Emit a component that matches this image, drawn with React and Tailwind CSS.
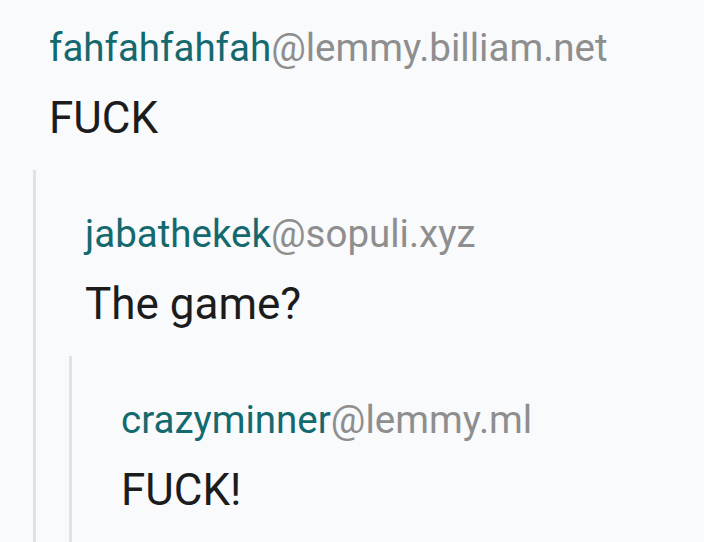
const thread = {
  user: 'fahfahfahfah',
  host: '@lemmy.billiam.net',
  body: 'FUCK',
  reply: {
    user: 'jabathekek',
    host: '@sopuli.xyz',
    body: 'The game?',
    reply: {
      user: 'crazyminner',
      host: '@lemmy.ml',
      body: 'FUCK!',
    },
  },
};

const CommentText = ({ comment }) => (
  <div>
    <div className="text-[38.5px] leading-[48px] whitespace-nowrap">
      <span className="text-[#14696e]">{comment.user}</span>
      <span className="text-[#8e8e8e]">{comment.host}</span>
    </div>
    <div className="mt-[18px] text-[44px] leading-[56px] text-[#1c1c1c]">{comment.body}</div>
  </div>
);

const Reply = ({ comment }) => (
  <div className="mt-6 border-l-[3px] border-[#dde4e8] pt-10 pb-24 pl-[49px]">
    <CommentText comment={comment} />
    {comment.reply && (
      <div className="-ml-[16px]">
        <Reply comment={comment.reply} />
      </div>
    )}
  </div>
);

export default function App() {
  return (
    <div
      className="h-[542px] w-[704px] overflow-hidden bg-[#f9fafc]"
      style={{ fontFamily: 'Roboto, "Noto Sans", sans-serif' }}
    >
      <div className="pt-6 pl-[49px]">
        <CommentText comment={thread} />
      </div>
      <div className="pl-[33px]">
        <Reply comment={thread.reply} />
      </div>
    </div>
  );
}
